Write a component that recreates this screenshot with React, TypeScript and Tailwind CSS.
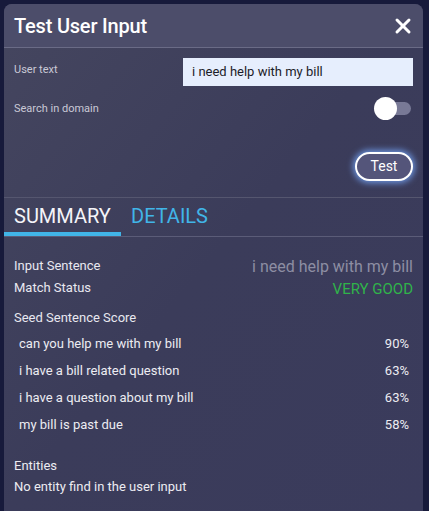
import { X } from "lucide-react";

const seeds = [
  { text: "can you help me with my bill", score: "90%" },
  { text: "i have a bill related question", score: "63%" },
  { text: "i have a question about my bill", score: "63%" },
  { text: "my bill is past due", score: "58%" },
];

export default function App() {
  return (
    <div
      className="min-h-[511px] w-[429px] bg-[#171a3b] p-1 pb-0"
      style={{ fontFamily: "Roboto, 'Noto Sans', sans-serif" }}
    >
      <div className="w-[419px] h-[507px] rounded-t-lg overflow-hidden bg-gradient-to-br from-[#45465f] via-[#3b3c5a] to-[#3a3b5c] text-white">
        {/* Header */}
        <div className="h-[44px] flex items-center justify-between pl-[10px] pr-[8px] bg-[#4c4d6a] border-b border-[#6a6b86]">
          <h1 className="text-[20px] font-medium leading-none tracking-[-0.2px]">Test User Input</h1>
          <X className="w-[24px] h-[24px]" strokeWidth={3} />
        </div>

        {/* Form */}
        <div className="pl-[10px] pr-[10px] pt-[10px]">
          <div className="flex items-start justify-between">
            <span className="text-[11px] text-[#c9c9d6] mt-[4px]">User text</span>
            <div className="w-[230px] h-[28px] bg-[#e6eefd] text-[#1c1c28] text-[13px] flex items-center pl-[9px]">
              i need help with my bill
            </div>
          </div>
          <div className="flex items-center justify-between mt-[11px] h-[23px]">
            <span className="text-[11px] text-[#c9c9d6] mt-[1px]">Search in domain</span>
            <div className="relative w-[37px] h-[23px] mr-[2px]">
              <div className="absolute left-[11px] top-[5px] w-[26px] h-[13px] rounded-full bg-[#787996]" />
              <div className="absolute left-0 top-0 w-[23px] h-[23px] rounded-full bg-white" />
            </div>
          </div>
          <div className="flex justify-end mt-[32px]">
            <button className="w-[58px] h-[29px] rounded-full border-2 border-white bg-[#54557a] text-[14px] text-white shadow-[0_0_6px_2px_rgba(120,170,255,0.8)]">
              Test
            </button>
          </div>
        </div>

        {/* Tabs */}
        <div className="mt-[16px] border-t border-[#55566f]">
          <div className="flex items-end h-[39px] border-b border-[#5b5c78]">
            <div className="w-[117px] h-full flex flex-col justify-end">
              <span className="text-[20px] pl-[10px] pb-[6px] leading-none text-[#f4f4f8]">SUMMARY</span>
              <div className="h-[4px] bg-[#41b5e8]" />
            </div>
            <span className="text-[20px] text-[#41b5e8] pl-[10px] pb-[10px] leading-none">DETAILS</span>
          </div>
        </div>

        {/* Summary */}
        <div className="pl-[10px] pr-[10px] pt-[18px] text-[13px]">
          <div className="flex justify-between items-start">
            <span className="text-[#e8e8f0] leading-[21px]">Input Sentence</span>
            <span className="text-[16px] text-[#8d8ea3] leading-[21px] mt-[1px]">i need help with my bill</span>
          </div>
          <div className="flex justify-between items-start">
            <span className="text-[#e8e8f0] leading-[21px]">Match Status</span>
            <span className="text-[15px] text-[#30b34a] leading-[21px] mt-[2px]">VERY GOOD</span>
          </div>
          <div className="mt-[8px] text-[#e8e8f0]">Seed Sentence Score</div>
          <div className="mt-[6px] flex flex-col gap-[8px]">
            {seeds.map((s) => (
              <div key={s.text} className="flex justify-between pl-[5px] pr-[4px] leading-[19px] text-[#ececf2]">
                <span>{s.text}</span>
                <span>{s.score}</span>
              </div>
            ))}
          </div>
          <div className="mt-[22px] text-[#ececf2]">Entities</div>
          <div className="mt-[2px] text-[#ececf2]">No entity find in the user input</div>
        </div>
      </div>
    </div>
  );
}
